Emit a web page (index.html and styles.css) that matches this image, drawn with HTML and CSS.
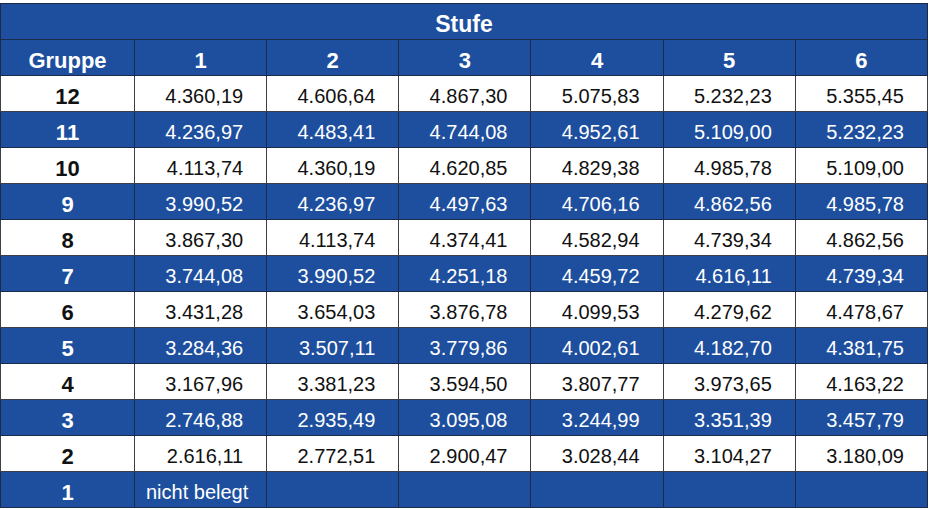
FILE: index.html
```html
<!DOCTYPE html>
<html lang="de">
<head>
<meta charset="utf-8">
<link rel="stylesheet" href="styles.css">
</head>
<body>
<div class="wrap">
<table class="pay">
<colgroup>
<col class="c-g"><col><col><col><col><col><col>
</colgroup>
<thead>
<tr class="blue"><th colspan="7" class="title">Stufe</th></tr>
<tr class="blue head"><th>Gruppe</th><th>1</th><th>2</th><th>3</th><th>4</th><th>5</th><th>6</th></tr>
</thead>
<tbody>
<tr class="white"><th>12</th><td>4.360,19</td><td>4.606,64</td><td>4.867,30</td><td>5.075,83</td><td>5.232,23</td><td>5.355,45</td></tr>
<tr class="blue"><th>11</th><td>4.236,97</td><td>4.483,41</td><td>4.744,08</td><td>4.952,61</td><td>5.109,00</td><td>5.232,23</td></tr>
<tr class="white"><th>10</th><td>4.113,74</td><td>4.360,19</td><td>4.620,85</td><td>4.829,38</td><td>4.985,78</td><td>5.109,00</td></tr>
<tr class="blue"><th>9</th><td>3.990,52</td><td>4.236,97</td><td>4.497,63</td><td>4.706,16</td><td>4.862,56</td><td>4.985,78</td></tr>
<tr class="white"><th>8</th><td>3.867,30</td><td>4.113,74</td><td>4.374,41</td><td>4.582,94</td><td>4.739,34</td><td>4.862,56</td></tr>
<tr class="blue"><th>7</th><td>3.744,08</td><td>3.990,52</td><td>4.251,18</td><td>4.459,72</td><td>4.616,11</td><td>4.739,34</td></tr>
<tr class="white"><th>6</th><td>3.431,28</td><td>3.654,03</td><td>3.876,78</td><td>4.099,53</td><td>4.279,62</td><td>4.478,67</td></tr>
<tr class="blue"><th>5</th><td>3.284,36</td><td>3.507,11</td><td>3.779,86</td><td>4.002,61</td><td>4.182,70</td><td>4.381,75</td></tr>
<tr class="white"><th>4</th><td>3.167,96</td><td>3.381,23</td><td>3.594,50</td><td>3.807,77</td><td>3.973,65</td><td>4.163,22</td></tr>
<tr class="blue"><th>3</th><td>2.746,88</td><td>2.935,49</td><td>3.095,08</td><td>3.244,99</td><td>3.351,39</td><td>3.457,79</td></tr>
<tr class="white"><th>2</th><td>2.616,11</td><td>2.772,51</td><td>2.900,47</td><td>3.028,44</td><td>3.104,27</td><td>3.180,09</td></tr>
<tr class="blue"><th>1</th><td class="left">nicht belegt</td><td></td><td></td><td></td><td></td><td></td></tr>
</tbody>
</table>
</div>
</body>
</html>
```
FILE: styles.css
```css
html, body {
  margin: 0;
  padding: 0;
  background: #ffffff;
}
.wrap {
  padding-top: 3px;
  width: 928px;
}
.pay {
  border-collapse: collapse;
  table-layout: fixed;
  width: 928px;
  font-family: "Liberation Sans", Arial, sans-serif;
  border: 1px solid #1b2a48;
}
.c-g { width: 134px; }
.pay th, .pay td {
  height: 36px;
  padding: 0;
  border: 1px solid #1b2a48;
  box-sizing: border-box;
}
.pay td {
  font-size: 20px;
  font-weight: 400;
  text-align: right;
  padding-right: 23px;
  padding-top: 6px;
}
.pay td.left {
  text-align: left;
  padding-left: 11px;
  padding-right: 0;
}
.pay th {
  font-size: 22px;
  font-weight: 700;
  text-align: center;
  padding-top: 6px;
}
.pay th.title {
  font-size: 23px;
  padding-top: 5px;
}
.blue {
  background: #1e4f9e;
  color: #ffffff;
}
.white {
  background: #ffffff;
  color: #111111;
}
.white td, .white th {
  border-color: #3a3f4a;
}
```
